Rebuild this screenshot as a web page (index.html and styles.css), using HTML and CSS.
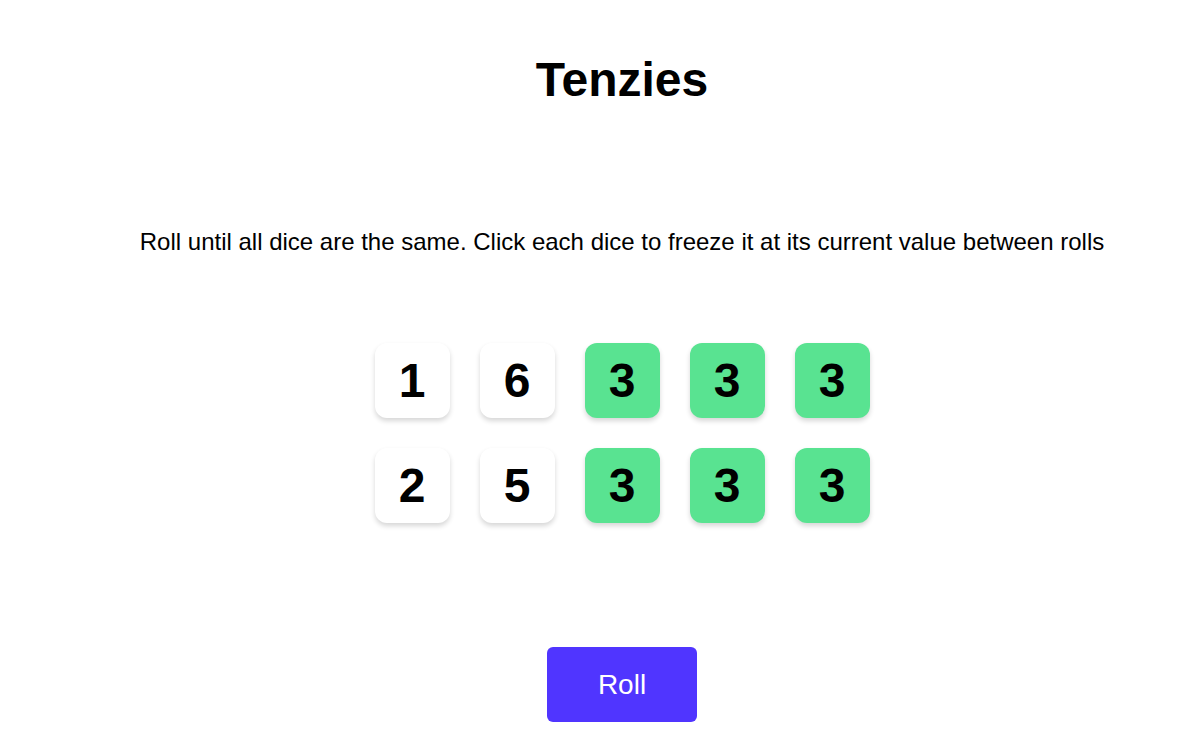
FILE: index.html
```html
<!DOCTYPE html>
<html>
<head>
<meta charset="utf-8">
<link rel="stylesheet" href="styles.css">
</head>
<body>
<main class="app">
  <h1 class="title">Tenzies</h1>
  <p class="instructions">Roll until all dice are the same. Click each dice to freeze it at its current value between rolls</p>
  <div class="dice-grid">
    <div class="die">1</div>
    <div class="die">6</div>
    <div class="die held">3</div>
    <div class="die held">3</div>
    <div class="die held">3</div>
    <div class="die">2</div>
    <div class="die">5</div>
    <div class="die held">3</div>
    <div class="die held">3</div>
    <div class="die held">3</div>
  </div>
  <button class="roll">Roll</button>
</main>
</body>
</html>
```
FILE: styles.css
```css
html, body {
  margin: 0;
  padding: 0;
  background: #ffffff;
}
body {
  font-family: "Liberation Sans", Arial, sans-serif;
  color: #000;
}
.app {
  display: flex;
  flex-direction: column;
  align-items: center;
  padding-left: 51px;
}
.title {
  margin: 52px 0 0;
  font-size: 48px;
  font-weight: bold;
  line-height: 56px;
}
.instructions {
  margin: 120px 0 0;
  font-size: 24px;
  line-height: 28px;
}
.dice-grid {
  margin-top: 87px;
  display: grid;
  grid-template-columns: repeat(5, 75px);
  grid-auto-rows: 75px;
  gap: 30px;
}
.die {
  display: flex;
  align-items: center;
  justify-content: center;
  background: #ffffff;
  border-radius: 12px;
  box-shadow: 0 3px 5px rgba(0, 0, 0, 0.16);
  font-size: 48px;
  font-weight: bold;
}
.die.held {
  background: #59e391;
}
.roll {
  margin-top: 124px;
  width: 150px;
  height: 75px;
  border: none;
  border-radius: 6px;
  background: #5035ff;
  color: #fff;
  font-family: "Liberation Sans", Arial, sans-serif;
  font-size: 28px;
}
```
